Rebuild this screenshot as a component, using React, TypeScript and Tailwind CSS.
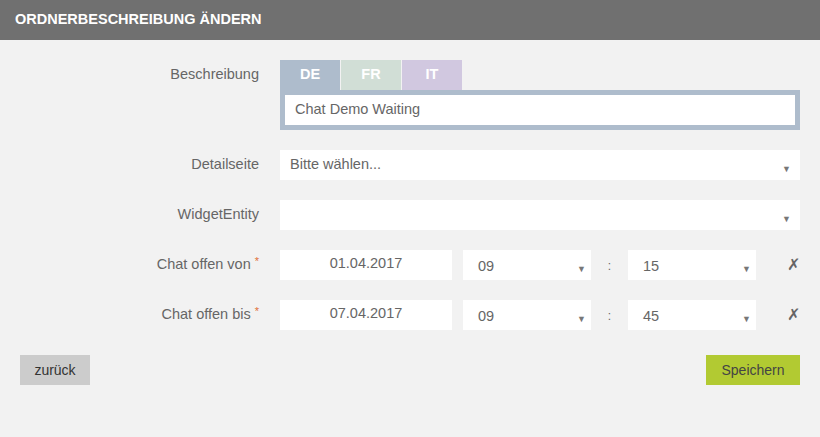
import React from 'react';

const font = { fontFamily: '"Liberation Sans", Arial, sans-serif' };

function Arrow() {
  return <span className="text-[9px] text-[#777] leading-none">▼</span>;
}

function SelectBox({ value, className, textClass = '' }: { value?: string; className: string; textClass?: string }) {
  return (
    <div className={`h-[30px] bg-white flex items-center justify-between text-[#666] ${className}`}>
      <span className={textClass}>{value}</span>
      <span className="mt-[5px]"><Arrow /></span>
    </div>
  );
}

function Label({ text, required }: { text: string; required?: boolean }) {
  return (
    <div className="w-[280px] pr-[21px] text-right text-[#666] shrink-0 h-[30px] flex items-center justify-end">
      {text}
      {required && <span className="text-[#e0703a] text-[11px] ml-[4px] -mt-[8px]">*</span>}
    </div>
  );
}

function TimeRow({ label, date, hour, minute }: { label: string; date: string; hour: string; minute: string }) {
  return (
    <div className="flex items-center">
      <Label text={label} required />
      <div className="w-[172px] h-[30px] bg-white flex items-center justify-center text-[#666] pb-[2px]">{date}</div>
      <SelectBox value={hour} className="w-[128px] ml-[11px] pl-[15px] pr-[5px]" textClass="mt-[3px]" />
      <div className="w-[37px] text-center text-[#666] text-[12px] mt-[2px]">:</div>
      <SelectBox value={minute} className="w-[128px] pl-[15px] pr-[5px]" textClass="mt-[3px]" />
      <div className="ml-[31px] text-[#666] text-[16px]" style={{ fontFamily: '"DejaVu Sans", sans-serif' }}>✗</div>
    </div>
  );
}

export default function App() {
  return (
    <div className="w-[820px] h-[437px] bg-[#f2f2f2] text-[14.5px]" style={font}>
      <div className="h-[40px] bg-[#707070] flex items-center pl-[15px]">
        <h1 className="text-white font-bold text-[14.5px]">ORDNERBESCHREIBUNG ÄNDERN</h1>
      </div>

      <div className="pt-[20px] flex flex-col gap-[20px]">
        <div className="flex">
          <Label text="Beschreibung" />
          <div className="w-[520px]">
            <div className="flex gap-[1px] h-[30px]">
              <div className="w-[60px] bg-[#aebccc] text-white font-bold text-[14.5px] flex items-center justify-center">DE</div>
              <div className="w-[60px] bg-[#d1ded6] text-white font-bold text-[14.5px] flex items-center justify-center">FR</div>
              <div className="w-[60px] bg-[#d1c8e0] text-white font-bold text-[14.5px] flex items-center justify-center">IT</div>
            </div>
            <div className="bg-[#aebccc] p-[5px]">
              <div className="h-[30px] bg-white flex items-center pl-[10px] text-[#666]">Chat Demo Waiting</div>
            </div>
          </div>
        </div>

        <div className="flex items-center">
          <Label text="Detailseite" />
          <SelectBox value="Bitte wählen..." className="w-[520px] pl-[10px] pr-[9px]" />
        </div>

        <div className="flex items-center">
          <Label text="WidgetEntity" />
          <SelectBox className="w-[520px] pl-[10px] pr-[9px]" />
        </div>

        <TimeRow label="Chat offen von" date="01.04.2017" hour="09" minute="15" />
        <TimeRow label="Chat offen bis" date="07.04.2017" hour="09" minute="45" />

        <div className="flex justify-between px-[20px] mt-[5px]">
          <button className="w-[70px] h-[30px] bg-[#cccccc] text-[#333] text-[14px]">zurück</button>
          <button className="w-[94px] h-[30px] bg-[#b2ca32] text-[#444] text-[14px]">Speichern</button>
        </div>
      </div>
    </div>
  );
}
